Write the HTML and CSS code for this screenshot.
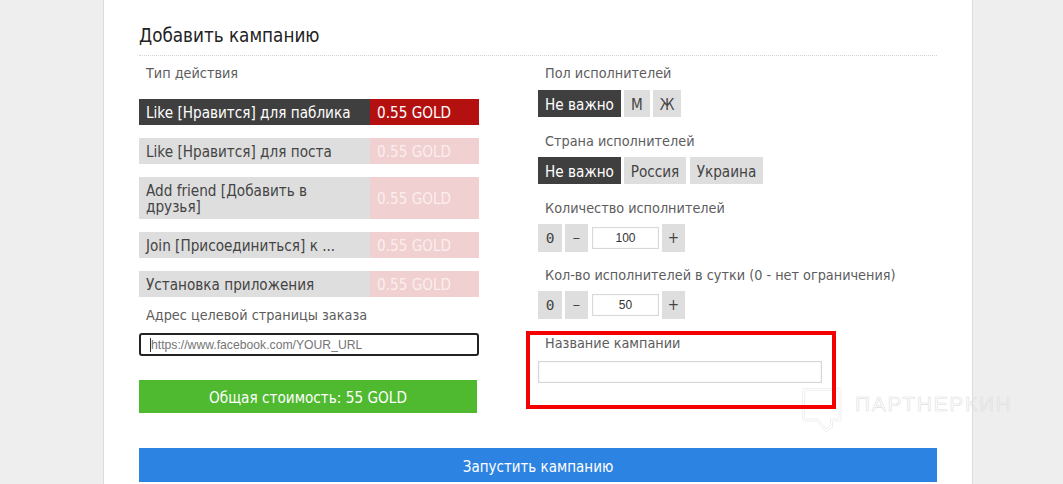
FILE: index.html
```html
<!DOCTYPE html>
<html lang="ru">
<head>
<meta charset="utf-8">
<title>Добавить кампанию</title>
<link rel="stylesheet" href="styles.css">
</head>
<body>
<main class="card">
  <h1 class="title">Добавить кампанию</h1>
  <div class="columns">
    <section class="col-left">
      <div class="label label-first">Тип действия</div>
      <div class="actions">
        <div class="action active"><span class="action-name">Like [Нравится] для паблика</span><span class="action-price">0.55 GOLD</span></div>
        <div class="action"><span class="action-name">Like [Нравится] для поста</span><span class="action-price">0.55 GOLD</span></div>
        <div class="action action-tall"><span class="action-name">Add friend [Добавить в друзья]</span><span class="action-price">0.55 GOLD</span></div>
        <div class="action"><span class="action-name">Join [Присоединиться] к ...</span><span class="action-price">0.55 GOLD</span></div>
        <div class="action"><span class="action-name">Установка приложения</span><span class="action-price">0.55 GOLD</span></div>
      </div>
      <div class="label label-url">Адрес целевой страницы заказа</div>
      <div class="url-input"><span class="caret"></span><span class="placeholder">https://www.facebook.com/YOUR_URL</span></div>
      <div class="total">Общая стоимость: 55 GOLD</div>
    </section>
    <section class="col-right">
      <div class="label label-first">Пол исполнителей</div>
      <div class="choices">
        <span class="chip chip-on">Не важно</span><span class="chip chip-m">М</span><span class="chip chip-zh">Ж</span>
      </div>
      <div class="label label-next">Страна исполнителей</div>
      <div class="choices">
        <span class="chip chip-on">Не важно</span><span class="chip chip-ru">Россия</span><span class="chip chip-ua">Украина</span>
      </div>
      <div class="label label-next">Количество исполнителей</div>
      <div class="stepper">
        <span class="step step-zero">0</span><span class="step step-minus">−</span><span class="num">100</span><span class="step">+</span>
      </div>
      <div class="label label-next label-daily">Кол-во исполнителей в сутки (0 - нет ограничения)</div>
      <div class="stepper">
        <span class="step step-zero">0</span><span class="step step-minus">−</span><span class="num">50</span><span class="step">+</span>
      </div>
      <div class="label label-name">Название кампании</div>
      <div class="name-input"></div>
    </section>
  </div>
  <button class="launch" type="button">Запустить кампанию</button>
</main>
<div class="watermark">
  <svg class="wm-icon" width="42" height="46" viewBox="0 0 42 46" fill="none" stroke="#efefef" stroke-width="1">
    <path d="M3.5 1.5H38a2 2 0 0 1 2 2V32a2 2 0 0 1-2 2H31.500V40L25 45L16 34H3.500a2 2 0 0 1-2-2V3.500a2 2 0 0 1 2-2Z"/>
    <path d="M5.500 3.500H36a2 2 0 0 1 2 2V30a2 2 0 0 1-2 2H29.500V38L25 42L17 32H5.500a2 2 0 0 1-2-2V5.500a2 2 0 0 1 2-2Z"/>
  </svg>
  <span class="wm-text">ПАРТНЕРКИН</span>
</div>
<div class="highlight"></div>
</body>
</html>
```
FILE: styles.css
```css
* { box-sizing: border-box; }
html, body { margin: 0; height: 484px; overflow: hidden; }
body {
  background: #eeeeee;
  font-family: "DejaVu Sans Condensed", "DejaVu Sans", sans-serif;
  font-stretch: condensed;
  font-size: 15.15px;
  color: #555;
  position: relative;
}
.card {
  width: 870px;
  height: 484px;
  margin-left: 103px;
  padding: 25px 35px 0 35px;
  background: #fff;
  border-left: 1px solid #dcdcdc;
  border-right: 1px solid #dcdcdc;
}
.title {
  margin: 0;
  height: 31px;
  font-size: 18.7px;
  line-height: 21px;
  font-weight: 400;
  color: #222;
  border-bottom: 1px dotted #d5d5d5;
}
.columns { display: flex; height: 392px; }
.col-left { width: 399px; }
.col-right { flex: 1; }
.label { font-size: 14.3px; line-height: 18px; color: #5c5c5c; padding-left: 7px; }
.label-first { padding-top: 8px; height: 26px; }
.col-left .label-first { margin-bottom: 17px; }
.col-right .label-first { margin-bottom: 8px; }
.label-next { margin-top: 15px; height: 18px; margin-bottom: 7px; }
.label-daily { margin-top: 14px; }
.actions { display: flex; flex-direction: column; gap: 13px; width: 340px; }
.action { display: flex; width: 340px; min-height: 26px; background: #dedede; }
.action-tall { min-height: 42px; }
.action-name { width: 231px; padding: 2px 7px 0; line-height: 16px; align-self: center; color: #444; }
.action-price {
  width: 109px;
  align-self: stretch;
  display: flex;
  align-items: center;
  padding: 2px 0 0 7px;
  background: #f0d0d0;
  color: #fbeeee;
}
.action.active { background: #3f3f3f; }
.action.active .action-name { color: #fff; }
.action.active .action-price { background: #b51010; color: #fff; }
.label-url { margin-top: 9px; height: 18px; }
.url-input {
  margin-top: 9px;
  width: 340px;
  height: 23px;
  display: flex;
  align-items: center;
  padding-left: 9px;
  background: #fff;
  border: 2px solid #222;
  border-radius: 3px;
}
.caret { width: 1px; height: 14px; background: #333; }
.placeholder { font-family: "Liberation Sans", sans-serif; font-stretch: normal; font-size: 12.2px; color: #757575; }
.total {
  margin-top: 24px;
  width: 338px;
  height: 33px;
  background: #4fb92f;
  color: #fff;
  font-size: 15.2px;
  line-height: 36px;
  text-align: center;
}
.choices { display: flex; height: 27px; }
.chip {
  display: flex;
  align-items: center;
  justify-content: center;
  padding-top: 2px;
  background: #dedede;
  color: #444;
  margin-right: 3px;
}
.chip-on { width: 83px; background: #3f3f3f; color: #fff; }
.chip-m { width: 26px; }
.chip-zh { width: 28px; }
.chip-ru { width: 62px; margin-right: 4px; }
.chip-ua { width: 73px; }
.stepper { display: flex; align-items: center; height: 28px; }
.step {
  width: 23px;
  height: 28px;
  margin-right: 3px;
  display: flex;
  align-items: center;
  justify-content: center;
  background: #dedede;
  color: #444;
  font-size: 15px;
}
.step-minus { font-size: 11px; }
.step-zero { width: 24px; font-family: "DejaVu Sans Mono", monospace; font-stretch: normal; font-size: 14.5px; }
.num {
  width: 67px;
  height: 22px;
  margin: 0 3px 0 1px;
  display: flex;
  align-items: center;
  justify-content: center;
  border: 1px solid #d8d8d8;
  box-shadow: inset 0 0 2px #eee;
  font-family: "Liberation Sans", sans-serif;
  font-stretch: normal;
  font-size: 12px;
  color: #333;
}
.label-name { margin-top: 15px; height: 18px; }
.name-input {
  margin-top: 9px;
  width: 284px;
  height: 22px;
  border: 1px solid #d5d5d5;
  box-shadow: inset 0 0 2px #e8e8e8;
}
.launch {
  display: block;
  width: 798px;
  height: 34px;
  padding: 3px 0 0;
  border: 0;
  background: #2d83e2;
  color: #fff;
  font: inherit;
  font-size: 15px;
}
.highlight {
  position: absolute;
  left: 526px;
  top: 331px;
  width: 310px;
  height: 78px;
  border: 4px solid #f40000;
}
.watermark {
  position: absolute;
  left: 801px;
  top: 387px;
  display: flex;
  align-items: flex-start;
}
.wm-icon { display: block; }
.wm-text {
  margin: 5px 0 0 12px;
  font-family: "Liberation Sans", sans-serif;
  font-stretch: normal;
  font-size: 21px;
  line-height: 24px;
  letter-spacing: 1.7px;
  color: transparent;
  -webkit-text-stroke: 0.6px #e0e0e0;
}
```
